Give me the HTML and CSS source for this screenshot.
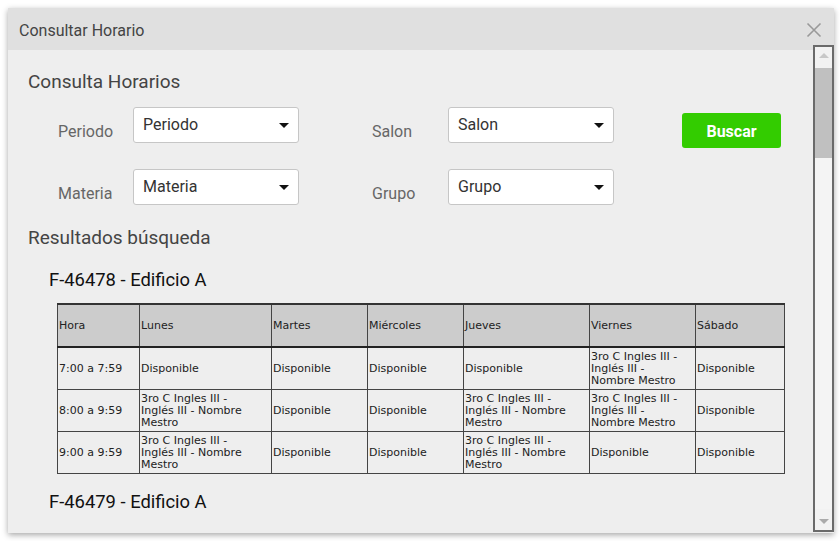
FILE: index.html
```html
<!DOCTYPE html>
<html lang="es">
<head>
<meta charset="utf-8">
<title>Consultar Horario</title>
<link rel="stylesheet" href="styles.css">
</head>
<body>
<div class="window">
  <div class="titlebar">
    <span class="title">Consultar Horario</span>
    <svg class="close" width="16" height="16" viewBox="0 0 16 16"><path d="M1.5 1.5 L14.5 14.5 M14.5 1.5 L1.5 14.5" stroke="#999" stroke-width="1.6" fill="none"/></svg>
  </div>
  <div class="body">
    <div class="content">
      <h2 class="section">Consulta Horarios</h2>
      <div class="form">
        <div class="frow">
          <span class="flabel">Periodo</span>
          <div class="select"><span>Periodo</span><span class="caret"></span></div>
          <span class="flabel second">Salon</span>
          <div class="select"><span>Salon</span><span class="caret"></span></div>
          <button class="btn">Buscar</button>
        </div>
        <div class="frow">
          <span class="flabel">Materia</span>
          <div class="select"><span>Materia</span><span class="caret"></span></div>
          <span class="flabel second">Grupo</span>
          <div class="select"><span>Grupo</span><span class="caret"></span></div>
        </div>
      </div>
      <h2 class="section results">Resultados búsqueda</h2>
      <h3 class="room">F-46478 - Edificio A</h3>
      <table class="sched">
        <colgroup>
          <col class="c-hora"><col class="c-lun"><col class="c-mar"><col class="c-mie"><col class="c-jue"><col class="c-vie"><col class="c-sab">
        </colgroup>
        <thead>
          <tr><th>Hora</th><th>Lunes</th><th>Martes</th><th>Miércoles</th><th>Jueves</th><th>Viernes</th><th>Sábado</th></tr>
        </thead>
        <tbody>
          <tr><td>7:00 a 7:59</td><td>Disponible</td><td>Disponible</td><td>Disponible</td><td>Disponible</td><td>3ro C Ingles III -<br>Inglés III -<br>Nombre Mestro</td><td>Disponible</td></tr>
          <tr><td>8:00 a 9:59</td><td>3ro C Ingles III -<br>Inglés III - Nombre<br>Mestro</td><td>Disponible</td><td>Disponible</td><td>3ro C Ingles III -<br>Inglés III - Nombre<br>Mestro</td><td>3ro C Ingles III -<br>Inglés III -<br>Nombre Mestro</td><td>Disponible</td></tr>
          <tr><td>9:00 a 9:59</td><td>3ro C Ingles III -<br>Inglés III - Nombre<br>Mestro</td><td>Disponible</td><td>Disponible</td><td>3ro C Ingles III -<br>Inglés III - Nombre<br>Mestro</td><td>Disponible</td><td>Disponible</td></tr>
        </tbody>
      </table>
      <h3 class="room room2">F-46479 - Edificio A</h3>
    </div>
    <div class="scrollbar">
      <div class="sb-btn"><span class="arrow-up"></span></div>
      <div class="sb-thumb"></div>
      <div class="sb-track"></div>
      <div class="sb-btn sb-bottom"><span class="arrow-down"></span></div>
    </div>
  </div>
</div>
</body>
</html>
```
FILE: styles.css
```css
html, body {
  margin: 0;
  padding: 0;
  background: #ffffff;
}
body {
  padding: 8px;
  font-family: Roboto, "Liberation Sans", sans-serif;
}
.window {
  width: 826px;
  height: 525px;
  background: #eeeeee;
  box-shadow: 0 2px 6px rgba(0, 0, 0, 0.35);
  display: flex;
  flex-direction: column;
}
.titlebar {
  height: 42px;
  flex: none;
  background: #e0e0e0;
  display: flex;
  align-items: center;
  justify-content: space-between;
  padding: 0 12px 0 11px;
}
.title {
  font-size: 16px;
  line-height: 18px;
  color: #444;
  padding-top: 3px;
}
.close {
  display: block;
  margin-top: 1px;
}
.body {
  flex: 1;
  display: flex;
  min-height: 0;
}
.content {
  flex: 1;
  overflow: hidden;
  padding: 21px 0 0 20px;
}
.section {
  margin: 0;
  font-size: 19px;
  line-height: 22px;
  font-weight: 400;
  color: #444;
}
.form {
  margin: 14px 0 0 30px;
  display: flex;
  flex-direction: column;
  gap: 26px;
}
.frow {
  display: flex;
  align-items: flex-start;
  height: 36px;
}
.flabel {
  width: 75px;
  padding-top: 16px;
  font-size: 16px;
  line-height: 18px;
  color: #666;
}
.flabel.second {
  width: 76px;
  margin-left: 73px;
}
.select {
  width: 166px;
  height: 36px;
  box-sizing: border-box;
  background: #fff;
  border: 1px solid #c6c6c6;
  border-radius: 3px;
  display: flex;
  align-items: center;
  justify-content: space-between;
  padding: 0 9px 1px 9px;
  font-size: 16px;
  color: #333;
}
.caret {
  width: 0;
  height: 0;
  border-left: 5px solid transparent;
  border-right: 5px solid transparent;
  border-top: 5px solid #111;
  margin-top: 2px;
}
.btn {
  margin: 6px 0 0 68px;
  width: 99px;
  height: 35px;
  border: none;
  border-radius: 3px;
  background: #33cc00;
  color: #fff;
  font-family: Roboto, "Liberation Sans", sans-serif;
  font-size: 16px;
  font-weight: 700;
  padding: 1px 0 0 0;
}
.results {
  margin-top: 22px;
}
.room {
  margin: 21px 0 0 21px;
  font-size: 18.4px;
  line-height: 20px;
  font-weight: 400;
  color: #111;
}
.room2 {
  margin-top: 18px;
}
.sched {
  margin: 13px 0 0 29px;
  width: 727px;
  table-layout: fixed;
  border-collapse: collapse;
  font-family: "DejaVu Sans", sans-serif;
  font-size: 11px;
  line-height: 12px;
  color: #222;
}
.c-hora { width: 82px; }
.c-lun { width: 132px; }
.c-mar { width: 96px; }
.c-mie { width: 96px; }
.c-jue { width: 126px; }
.c-vie { width: 106px; }
.c-sab { width: 89px; }
.sched th, .sched td {
  border: 1px solid #444;
  padding: 0 0 0 1px;
  text-align: left;
  vertical-align: middle;
  overflow: hidden;
  white-space: nowrap;
}
.sched th {
  background: #cccccc;
  font-weight: 400;
  height: 41px;
  border-top: 2px solid #333;
  border-bottom: 2px solid #222;
}
.sched td {
  background: #eeeeee;
  height: 41px;
}
.scrollbar {
  width: 21px;
  height: 487px;
  margin-top: -5px;
  box-sizing: border-box;
  border: 2px solid #6a6a6a;
  background: #f4f4f4;
  display: flex;
  flex-direction: column;
  flex: none;
}
.sb-btn {
  height: 21px;
  flex: none;
  background: #f2f2f2;
  display: flex;
  align-items: center;
  justify-content: center;
}
.sb-bottom {
  margin-top: auto;
}
.arrow-up {
  width: 0;
  height: 0;
  border-left: 5px solid transparent;
  border-right: 5px solid transparent;
  border-bottom: 5px solid #c8c8c8;
  margin-top: -4px;
}
.arrow-down {
  width: 0;
  height: 0;
  border-left: 5px solid transparent;
  border-right: 5px solid transparent;
  border-top: 5px solid #aaaaaa;
  margin-top: 4px;
}
.sb-thumb {
  height: 90px;
  flex: none;
  background: #c0c0c0;
}
.sb-track {
  flex: 1;
}
```
